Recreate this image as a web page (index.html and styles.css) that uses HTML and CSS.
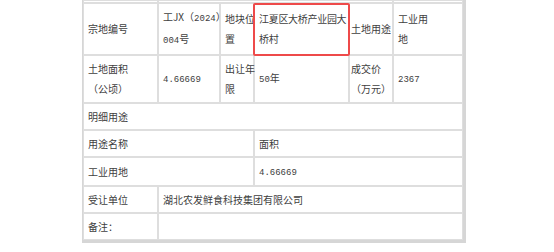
FILE: index.html
```html
<!DOCTYPE html>
<html lang="zh-CN">
<head>
<meta charset="utf-8">
<title>地块成交信息</title>
<link rel="stylesheet" href="styles.css">
</head>
<body>
<div class="page">
  <table class="deal">
    <colgroup>
      <col class="c1"><col class="c2"><col class="c3"><col class="c4"><col class="c5"><col class="c6">
    </colgroup>
    <tr class="cut">
      <td></td><td colspan="4"></td><td></td>
    </tr>
    <tr>
      <td>宗地编号</td>
      <td>工JX（<span class="num">2024</span>）<br><span class="num">004</span>号</td>
      <td>地块位<br>置</td>
      <td class="mark">江夏区大桥产业园大<br>桥村</td>
      <td class="tight">土地用途</td>
      <td>工业用<br>地</td>
    </tr>
    <tr>
      <td>土地面积<br>（公顷）</td>
      <td><span class="num">4.66669</span></td>
      <td>出让年<br>限</td>
      <td><span class="num">50</span>年</td>
      <td class="tight">成交价<br>（万元）</td>
      <td><span class="num">2367</span></td>
    </tr>
    <tr class="single">
      <td colspan="6">明细用途</td>
    </tr>
    <tr class="single">
      <td colspan="3">用途名称</td>
      <td colspan="3">面积</td>
    </tr>
    <tr class="single">
      <td colspan="3">工业用地</td>
      <td colspan="3"><span class="num">4.66669</span></td>
    </tr>
    <tr class="single">
      <td>受让单位</td>
      <td colspan="5">湖北农发鲜食科技集团有限公司</td>
    </tr>
    <tr class="single">
      <td>备注：</td>
      <td colspan="5"></td>
    </tr>
  </table>
</div>
</body>
</html>
```

FILE: styles.css
```css
html, body {
  margin: 0;
  padding: 0;
  background: #ffffff;
}

.page {
  padding-left: 82px;
}

.deal {
  table-layout: fixed;
  width: 380px;
  border-collapse: separate;
  border-spacing: 0;
  border-left: 1px solid #d6d6d6;
  border-right: 3px solid #d6d6d6;
  border-bottom: 3px solid #d6d6d6;
  font-family: "Noto Sans CJK SC", "Noto Sans", sans-serif;
  font-size: 10px;
  color: #404040;
}

.c1 { width: 75px; }
.c2 { width: 62px; }
.c3 { width: 34px; }
.c4 { width: 95px; }
.c5 { width: 44px; }
.c6 { width: 70px; }

.deal td {
  border: 1px solid #dedede;
  padding: 3px 3px 3px 4px;
  line-height: 20px;
  vertical-align: middle;
  text-align: left;
  white-space: nowrap;
}

.deal .cut td {
  padding: 0;
  height: 1px;
  line-height: 1px;
}

.deal .single td {
  padding-top: 3px;
  padding-bottom: 2px;
}

.deal td.tight {
  padding-left: 1px;
  padding-right: 0;
}

.num {
  font-family: "Liberation Mono", "DejaVu Sans Mono", monospace;
  font-size: 9px;
}

.mark {
  position: relative;
  letter-spacing: -0.3px;
}

/* red highlight frame drawn over the location cell */
.mark::after {
  content: "";
  position: absolute;
  inset: -1px -2px -2px -2px;
  border: 2px solid #ee4a4a;
  border-radius: 2px;
  pointer-events: none;
}
```
